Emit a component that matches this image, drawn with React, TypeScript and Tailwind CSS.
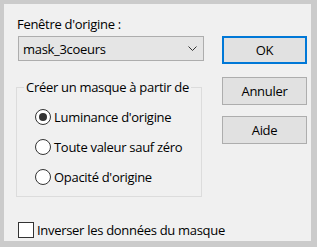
import React from "react";

const font = { fontFamily: '"Open Sans", "Noto Sans", sans-serif' };

function Radio({ checked, label }: { checked?: boolean; label: string }) {
  return (
    <div className="flex items-center h-[30px]">
      <span className="w-[16px] h-[16px] rounded-full border border-[#333333] bg-white flex items-center justify-center shrink-0">
        {checked && <span className="w-[8px] h-[8px] rounded-full bg-[#333333]" />}
      </span>
      <span className="ml-[3px]">{label}</span>
    </div>
  );
}

export default function App() {
  return (
    <div
      className="w-[317px] h-[247px] bg-[#cbcbcb] pt-[4px] pl-[4px] pr-[6px] pb-[6px] text-[13px] leading-[20px] tracking-[-0.3px] text-black whitespace-nowrap"
      style={font}
    >
      <div className="w-full h-full bg-[#f0f0f0] flex pl-[12px] pt-[10px]">
        {/* left column */}
        <div className="w-[188px] flex flex-col">
          <div className="pl-[1px]">Fenêtre d'origine :</div>
          <div className="ml-[2px] mt-[2px] h-[25px] w-[186px] bg-[#e5e5e5] border border-[#adadad] flex items-center justify-between pl-[4px] pr-[6px]">
            <span>mask_3coeurs</span>
            <svg width="9" height="6" viewBox="0 0 9 6">
              <polyline points="0.5,0.5 4.5,4.5 8.5,0.5" fill="none" stroke="#333" strokeWidth="1" />
            </svg>
          </div>
          <fieldset className="mt-[16px] w-[186px] h-[120px] border border-[#dcdcdc]">
            <legend className="ml-[7px] px-[2px]">Créer un masque à partir de</legend>
            <div className="mt-[5px] pl-[18px] flex flex-col">
              <Radio checked label="Luminance d'origine" />
              <Radio label="Toute valeur sauf zéro" />
              <Radio label="Opacité d'origine" />
            </div>
          </fieldset>
          <div className="mt-[23px] ml-[2px] flex items-center">
            <span className="w-[16px] h-[16px] border border-[#333333] bg-white shrink-0" />
            <span className="ml-[3px]">Inverser les données du masque</span>
          </div>
        </div>
        {/* right column */}
        <div className="ml-[18px] w-[85px] flex flex-col pt-[22px] gap-[13px]">
          <button className="h-[28px] w-full bg-[#e1e1e1] border-2 border-[#0078d7]">OK</button>
          <button className="h-[28px] w-full bg-[#e1e1e1] border border-[#adadad]">Annuler</button>
          <button className="-mt-[2px] h-[28px] w-full bg-[#e1e1e1] border border-[#adadad]">Aide</button>
        </div>
      </div>
    </div>
  );
}
